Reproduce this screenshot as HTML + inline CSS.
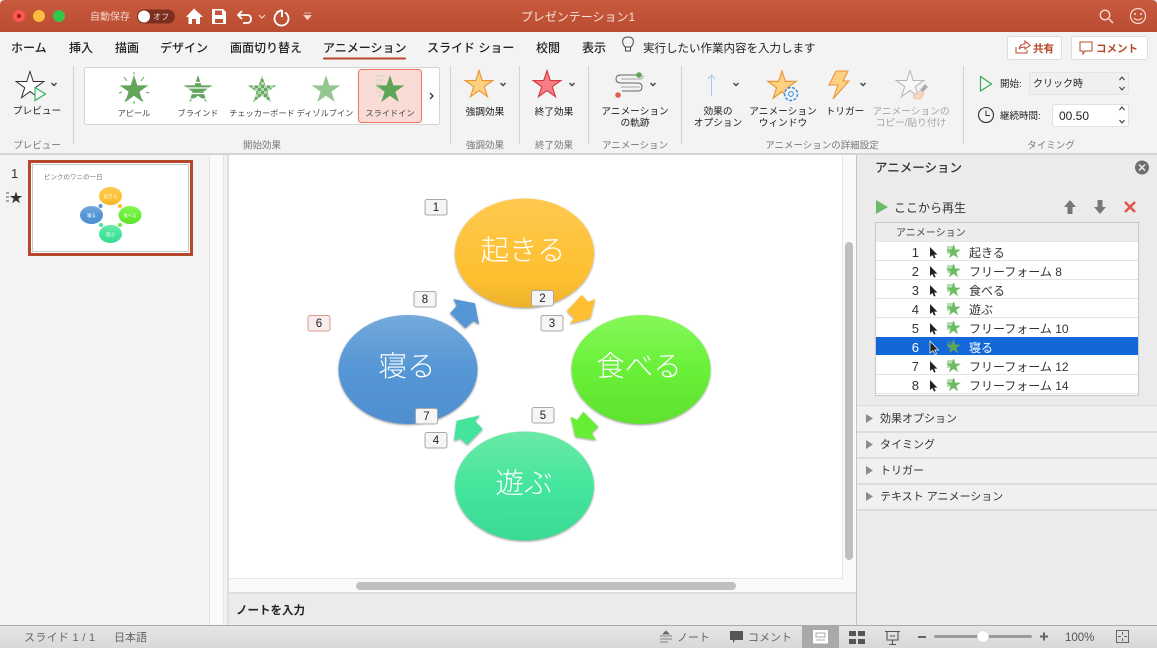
<!DOCTYPE html>
<html><head><meta charset="utf-8"><style>
html,body{margin:0;padding:0;background:#fff;width:1157px;height:648px;overflow:hidden}
svg{display:block}
text{font-family:"Liberation Sans","Noto Sans CJK JP",sans-serif;fill:#333}
.t{font-size:12px;font-weight:500;fill:#222}
.s{font-size:8.2px;fill:#444;text-anchor:middle}
.m{font-size:9.700px;fill:#222;text-anchor:middle}
.g{font-size:9.500px;fill:#777;text-anchor:middle}
.c{fill:none;stroke:#444;stroke-width:1.4}
.r{font-size:12px;fill:#333}
.n{font-size:13px;fill:#333;text-anchor:end}
.b{font-size:11.500px;fill:#222;text-anchor:middle}
.o{font-size:28.500px;fill:#fff;text-anchor:middle;font-weight:300}
.sec{font-size:11px;fill:#333}
.st{font-size:11px;fill:#666}
</style></head><body>
<svg width="1157" height="648" viewBox="0 0 1157 648" xmlns="http://www.w3.org/2000/svg">
<defs>
<path id="st" d="M0-10 2.245-3.09 9.51-3.09 3.633 1.18 5.88 8.09 0 3.82-5.88 8.09-3.633 1.18-9.51-3.09-2.245-3.09Z"/>
<linearGradient id="tb" x1="0" y1="0" x2="0" y2="1"><stop offset="0" stop-color="#c9593e"/><stop offset="1" stop-color="#b94d31"/></linearGradient>
<linearGradient id="go" x1="0" y1="0" x2="0" y2="1"><stop offset="0" stop-color="#ffc950"/><stop offset=".75" stop-color="#fdbf2e"/><stop offset="1" stop-color="#ecb22c"/></linearGradient>
<linearGradient id="gg" x1="0" y1="0" x2="0" y2="1"><stop offset="0" stop-color="#86f75a"/><stop offset=".5" stop-color="#69f038"/><stop offset="1" stop-color="#5fe22e"/></linearGradient>
<linearGradient id="gt" x1="0" y1="0" x2="0" y2="1"><stop offset="0" stop-color="#6ce8a8"/><stop offset=".5" stop-color="#44e69c"/><stop offset="1" stop-color="#3ada94"/></linearGradient>
<linearGradient id="gb" x1="0" y1="0" x2="0" y2="1"><stop offset="0" stop-color="#75a9db"/><stop offset=".5" stop-color="#5596d5"/><stop offset="1" stop-color="#4f8fcf"/></linearGradient>
<linearGradient id="sb" x1="0" y1="0" x2="0" y2="1"><stop offset="0" stop-color="#e6e6e6"/><stop offset="1" stop-color="#d8d8d8"/></linearGradient>
<filter id="sh" x="-10%" y="-10%" width="120%" height="120%"><feDropShadow dx="0" dy="1" stdDeviation="1" flood-color="#000" flood-opacity=".42"/></filter>
<pattern id="blind" width="6" height="5" patternUnits="userSpaceOnUse" y="77"><rect width="6" height="5" fill="#a9d0a4"/><rect width="6" height="3.200" fill="#62a55b"/></pattern>
<pattern id="chk" width="6" height="6" patternUnits="userSpaceOnUse" x="2" y="76"><rect width="6" height="6" fill="#b3d7ae"/><rect width="3" height="3" fill="#68a961"/><rect x="3" y="3" width="3" height="3" fill="#68a961"/></pattern>
<g id="rowi"><path d="M0 0V10L2.4 8 4 11.5 5.6 11 4.2 7.6H7.4Z" fill="#222" transform="translate(0,-5)"/><rect x="17" y="-6" width="8" height="8" fill="#b9dcb4"/><use href="#st" transform="translate(23.5,0) scale(.78)" fill="#6cbd62"/></g>
</defs>

<rect width="1157" height="648" fill="#ebebeb"/>
<!-- title bar -->
<path d="M0 32V5Q0 0 5 0H1152Q1157 0 1157 5V32Z" fill="url(#tb)"/>
<circle cx="19" cy="16" r="6" fill="#fc5753"/><circle cx="19" cy="16" r="2" fill="#8e1d18"/>
<circle cx="39" cy="16" r="6" fill="#fdbc40"/><circle cx="59" cy="16" r="6" fill="#34c84a"/>
<text x="90" y="20" font-size="10" style="fill:#f4d6cc">自動保存</text>
<rect x="137" y="9.500" width="38" height="14" rx="7" fill="#7c2f1f"/><circle cx="144" cy="16.500" r="6" fill="#fff"/>
<text x="153" y="19.500" font-size="8" style="fill:#eedcd7">オフ</text>
<path d="M186 17 194 8.500 203 17H200V24H196V19H192V24H188.500V17Z" fill="#fff"/>
<path d="M212 9H223L226 12V24H212ZM215 10.500V15H222V10.500ZM215 19V23H223V19Z" fill="#fff" fill-rule="evenodd"/>
<path d="M242 11 238 15 242 19M238 15H247Q251 15 251 19T247 23H243" fill="none" stroke="#fff" stroke-width="1.800"/>
<path d="M259 15 262 18 265 15" fill="none" stroke="#f3d5cc" stroke-width="1.200"/>
<path d="M278 12.500A7 7 0 1 0 285 12.500" fill="none" stroke="#fff" stroke-width="1.800"/><path d="M282 10V17M282 10 276.500 12.500" fill="none" stroke="#fff" stroke-width="2" opacity="1"/>
<path d="M304 13H311M304 15.500H311L307.500 19.500Z" fill="#f3d5cc" stroke="#f3d5cc" stroke-width=".8"/>
<text x="578" y="21" font-size="12" text-anchor="middle" style="fill:#f7e3dd">プレゼンテーション1</text>
<circle cx="1105" cy="15" r="4.800" fill="none" stroke="#f3dcd6" stroke-width="1.300"/><path d="M1109 19 1113 23" stroke="#f3dcd6" stroke-width="1.500"/>
<circle cx="1138" cy="16" r="7.500" fill="none" stroke="#f3dcd6" stroke-width="1.200"/><circle cx="1135" cy="14" r="1" fill="#f3dcd6"/><circle cx="1141" cy="14" r="1" fill="#f3dcd6"/><path d="M1134 18Q1138 22 1142 18" fill="none" stroke="#f3dcd6"/>

<!-- ribbon -->
<rect y="32" width="1157" height="121" fill="#f3f3f3"/><rect y="153" width="1157" height="2" fill="#d4d4d4"/>
<text class="t" x="11" y="52">ホーム</text><text class="t" x="69" y="52">挿入</text><text class="t" x="115" y="52">描画</text><text class="t" x="160" y="52">デザイン</text><text class="t" x="230" y="52">画面切り替え</text><text class="t" x="323" y="52">アニメーション</text><text class="t" x="427" y="52">スライド ショー</text><text class="t" x="536" y="52">校閲</text><text class="t" x="582" y="52">表示</text>
<rect x="323" y="57.500" width="83" height="2" rx="1" fill="#b7472a"/>
<path d="M625 47C621 42 622 37 628 37S635 42 631 47ZM625.500 47V51H630.500V47" fill="none" stroke="#444" stroke-width="1"/>
<text x="643" y="52" font-size="11.500" style="fill:#222">実行したい作業内容を入力します</text>
<rect x="1007.500" y="36.500" width="54" height="23" rx="2" fill="#fff" stroke="#ddd"/>
<path d="M1016 47V53H1027V50M1019 49Q1020 44 1025 44V41L1030 45.500 1025 49V47Q1021 47 1019 49" fill="none" stroke="#b7472a"/>
<text x="1033" y="52" font-size="10.500" font-weight="700" style="fill:#b7472a">共有</text>
<rect x="1071.500" y="36.500" width="76" height="23" rx="2" fill="#fff" stroke="#ddd"/>
<path d="M1080 42H1092V51H1085L1083 54V51H1080Z" fill="none" stroke="#b7472a"/>
<text x="1096" y="52" font-size="10.500" font-weight="700" style="fill:#b7472a">コメント</text>

<!-- separators -->
<g fill="#d2d2d2"><rect x="73" y="66" width="1" height="78"/><rect x="450" y="66" width="1" height="78"/><rect x="519" y="66" width="1" height="78"/><rect x="588" y="66" width="1" height="78"/><rect x="681" y="66" width="1" height="78"/><rect x="963" y="66" width="1" height="78"/></g>

<!-- preview -->
<use href="#st" transform="translate(30,86) scale(1.450)" fill="#fff" stroke="#333" stroke-width=".7"/>
<path d="M35 87.500 45.500 94 35 100.500Z" fill="#f7f7f7" stroke="#38b35a" stroke-width="1.200"/>
<path class="c" d="M51.500 83 54 85.500 56.500 83"/>
<text class="m" x="37" y="114">プレビュー</text>
<text class="g" x="37" y="148.500">プレビュー</text>

<!-- gallery -->
<rect x="84.500" y="67.500" width="355" height="57" rx="2" fill="#fff" stroke="#d4d4d4"/>
<rect x="358.500" y="69.500" width="63" height="53" rx="3" fill="#f9dcd5" stroke="#e8735f"/>
<use href="#st" transform="translate(134,90) scale(1.500)" fill="#62a55b"/>
<path d="M124 77 127 81M144 77 141 81M134 72V74.500M119 93 122 92M149 93 146 92M125 101 127.500 98M134 104V101M143 101 140.500 98" stroke="#62a55b" fill="none"/>
<path transform="translate(198,90)" d="M0-15 3.370-4.640 14.270-4.640 5.450 1.770 8.820 12.140 0 5.730-8.820 12.140-5.450 1.770-14.270-4.640-3.370-4.640Z" fill="#62a55b"/>
<g stroke="#fff" stroke-width="1.200"><path d="M180 82.500H216M180 88H216M180 93.500H216M180 99H216"/></g>
<path transform="translate(262,90)" d="M0-15 3.370-4.640 14.270-4.640 5.450 1.770 8.820 12.140 0 5.730-8.820 12.140-5.450 1.770-14.270-4.640-3.370-4.640Z" fill="url(#chk)"/>
<use href="#st" transform="translate(326,90) scale(1.500)" fill="#97c791"/>
<use href="#st" transform="translate(390,90) scale(1.500)" fill="#5fa558"/>
<path d="M376 76H386M375 80H383M376 84H382M376 88H380M377 92H381M378 96H381" stroke="#c6d7c0"/>
<text class="s" x="134" y="116">アピール</text>
<text class="s" x="198" y="116">ブラインド</text>
<text class="s" x="262" y="116">チェッカーボード</text>
<text class="s" x="325" y="116">ディゾルブイン</text>
<text class="s" x="390" y="116">スライドイン</text>
<path d="M430 93 433 96 430 99" fill="none" stroke="#333" stroke-width="1.300"/>
<text class="g" x="262" y="148.500">開始効果</text>

<!-- emphasis -->
<use href="#st" transform="translate(479,85) scale(1.450)" fill="#fdd17f" stroke="#e8983a" stroke-width=".8"/>
<path class="c" d="M500.500 83 503 85.500 505.500 83"/>
<text class="m" x="485" y="115">強調効果</text><text class="g" x="485" y="148.500">強調効果</text>
<use href="#st" transform="translate(547,85) scale(1.450)" fill="#f87d86" stroke="#d33a42" stroke-width=".8"/>
<path class="c" d="M569.500 83 572 85.500 574.500 83"/>
<text class="m" x="554" y="115">終了効果</text><text class="g" x="554" y="148.500">終了効果</text>
<!-- motion -->
<path d="M638 75H621Q616 75 616 79T621 83H638Q642 83 642 87T638 91H622" fill="none" stroke="#666"/>
<circle cx="639" cy="75" r="2.800" fill="#5fa558"/><circle cx="618" cy="95" r="2.800" fill="#e25b50"/>
<path d="M621 79H640Q643 79 643 75M621 87H640" fill="none" stroke="#666" opacity=".55"/>
<path class="c" d="M650.500 83 653 85.500 655.500 83"/>
<text class="m" x="635" y="114.500">アニメーション</text><text class="m" x="635" y="126">の軌跡</text>
<text class="g" x="635" y="148.500">アニメーション</text>
<!-- options -->
<path d="M711.500 96V75M708 79 711.500 75 715 79" fill="none" stroke="#a7c8e6"/>
<path class="c" d="M733.500 83 736 85.500 738.500 83"/>
<text class="m" x="718" y="114.500">効果の</text><text class="m" x="718" y="126">オプション</text>
<use href="#st" transform="translate(782,86) scale(1.500)" fill="#fdd17f" stroke="#e8983a" stroke-width=".8"/>
<circle cx="791" cy="94" r="6.500" fill="#f3f3f3" stroke="#2f8ae0" stroke-width="1.400" stroke-dasharray="3 1.500"/><circle cx="791" cy="94" r="2.400" fill="none" stroke="#2f8ae0"/>
<text class="m" x="783" y="114.500">アニメーション</text><text class="m" x="783" y="126">ウィンドウ</text>
<path d="M836 71H848L843 81H849L833 99 838 85H829Z" fill="#fdd17f" stroke="#ec8f3a"/>
<path class="c" d="M860.500 83 863 85.500 865.500 83"/>
<text class="m" x="845" y="114.500">トリガー</text>
<use href="#st" transform="translate(910,85) scale(1.450)" fill="#f8f8f8" stroke="#b5b5b5" stroke-width=".7"/>
<path d="M913 96 921 90 924 93 921 99H914Z" fill="#f5d6c3" stroke="#e0b8a0" stroke-width=".6"/><path d="M920 90 925 84 928 87 923 92Z" fill="#aaa"/>
<text class="m" x="911" y="114.500" style="fill:#a5a5a5">アニメーションの</text><text class="m" x="911" y="126" style="fill:#a5a5a5">コピー/貼り付け</text>
<text class="g" x="822" y="148.500">アニメーションの詳細設定</text>
<!-- timing -->
<path d="M980.500 76.500 991.500 84 980.500 91Z" fill="none" stroke="#3ca85a" stroke-width="1.200"/>
<text x="1000" y="87" font-size="9.500" style="fill:#222">開始:</text>
<rect x="1029.500" y="72.500" width="99" height="22" rx="2" fill="#f0f0f0" stroke="#e4e4e4"/>
<text x="1033" y="87" font-size="10" style="fill:#222">クリック時</text>
<path d="M1119.500 80 1122 77 1124.500 80M1119.500 87 1122 90 1124.500 87" fill="none" stroke="#333"/>
<circle cx="986" cy="115" r="7.500" fill="none" stroke="#333" stroke-width="1.100"/><path d="M986 110.500V115.500H990" fill="none" stroke="#333"/>
<text x="1000" y="119" font-size="9.500" style="fill:#222">継続時間:</text>
<rect x="1052.500" y="104.500" width="76" height="22" rx="2" fill="#fff" stroke="#e0e0e0"/>
<text x="1059" y="120" font-size="12" style="fill:#222">00.50</text>
<path d="M1119.500 110 1122 107 1124.500 110M1119.500 120 1122 123 1124.500 120" fill="none" stroke="#333"/>
<text class="g" x="1051" y="148.500">タイミング</text>

<!-- thumbnails pane -->
<rect y="155" width="209" height="470" fill="#f3f3f3"/>
<rect x="209" y="155" width="1" height="470" fill="#e2e2e2"/><rect x="210" y="155" width="13" height="470" fill="#fafafa"/><rect x="223" y="155" width="1" height="470" fill="#e6e6e6"/><rect x="224" y="155" width="3" height="470" fill="#f3f3f3"/><rect x="227" y="155" width="2" height="470" fill="#dedede"/>
<text x="11" y="178" font-size="13" style="fill:#333">1</text>
<path d="M6 193H9M6 197H9M6 201H9" stroke="#555"/>
<use href="#st" transform="translate(16,198) scale(.65)" fill="#333"/>
<rect x="29.500" y="161.500" width="162" height="93" fill="#fff" stroke="#b7472a" stroke-width="3"/>
<rect x="32.500" y="164.500" width="156" height="87" fill="#fff" stroke="#c8c8c8"/>
<text x="44" y="179" font-size="6.500" style="fill:#777">ピンクのワニの一日</text>
<ellipse cx="110.500" cy="196" rx="11.500" ry="9" fill="url(#go)"/><ellipse cx="130" cy="215" rx="11.500" ry="9" fill="url(#gg)"/><ellipse cx="110.500" cy="234" rx="11.500" ry="9" fill="url(#gt)"/><ellipse cx="91.500" cy="215" rx="11.500" ry="9" fill="url(#gb)"/>
<circle cx="120" cy="206" r="2" fill="#fdbf2d"/><circle cx="120" cy="225" r="2" fill="#69f038"/><circle cx="101" cy="225" r="2" fill="#44e69c"/><circle cx="100.500" cy="206" r="2" fill="#5596d5"/>
<g font-size="4.500" text-anchor="middle"><text x="110.500" y="198" style="fill:#fff">起きる</text><text x="130" y="217" style="fill:#fff">食べる</text><text x="110.500" y="236" style="fill:#fff">遊ぶ</text><text x="91.500" y="217" style="fill:#fff">寝る</text></g>

<!-- slide area -->
<rect x="229" y="155" width="627" height="437" fill="#fafafa"/>
<rect x="229" y="155" width="613" height="423" fill="#fff"/>
<rect x="842" y="155" width="1" height="424" fill="#e6e6e6"/><rect x="229" y="578" width="614" height="1" fill="#e6e6e6"/>
<rect x="845" y="242" width="8" height="318" rx="4" fill="#bfbfbf"/>
<rect x="356" y="582" width="380" height="8" rx="4" fill="#bfbfbf"/>
<rect x="229" y="592" width="627" height="2" fill="#dedede"/>
<rect x="229" y="594" width="627" height="31" fill="#ebebeb"/>
<text x="236" y="614" font-size="11.500" font-weight="700" style="fill:#222">ノートを入力</text>

<ellipse cx="524.500" cy="253" rx="69.500" ry="54.500" fill="url(#go)" filter="url(#sh)"/>
<ellipse cx="641" cy="369.500" rx="69.500" ry="54.500" fill="url(#gg)" filter="url(#sh)"/>
<ellipse cx="524.500" cy="486" rx="69.500" ry="54.500" fill="url(#gt)" filter="url(#sh)"/>
<ellipse cx="408" cy="369.500" rx="69.500" ry="54.500" fill="url(#gb)" filter="url(#sh)"/>
<polygon points="581.700,295 588.300,301.700 595,299 590.300,318.300 569.700,323.700 574.300,318.300 566.700,311" fill="#fdc032" filter="url(#sh)"/>
<polygon points="583.300,411.700 598.300,426.700 591.700,432.700 596,440 575.300,436.700 570.700,416.700 577.300,420" fill="#66ee36" filter="url(#sh)"/>
<polygon points="480,415.300 475,421 482.700,429 467.300,444.700 460,438.300 454,440.700 456.700,420.700" fill="#44e49c" filter="url(#sh)"/>
<polygon points="453.300,299 475,303.300 479,324.300 473.300,321 465.300,328.300 450,313.300 456.700,305.700" fill="#5596d5" filter="url(#sh)"/>
<text class="o" x="523" y="260">起きる</text>
<text class="o" x="639" y="376">食べる</text>
<text class="o" x="524" y="493">遊ぶ</text>
<text class="o" x="407" y="376">寝る</text>

<g fill="#f5f5f5" stroke="#a8a8a8">
<rect x="425" y="199.500" width="22" height="15.500" rx="2"/><rect x="531.500" y="290.500" width="22" height="15.500" rx="2"/><rect x="541" y="315.500" width="22" height="15.500" rx="2"/><rect x="425" y="432.500" width="22" height="15.500" rx="2"/><rect x="532" y="407.500" width="22" height="15.500" rx="2"/><rect x="415.500" y="408.500" width="22" height="15.500" rx="2"/><rect x="414" y="291.500" width="22" height="15.500" rx="2"/>
<rect x="308" y="315.500" width="22" height="15.500" rx="2" stroke="#dc9a8e" fill="#f8eeec"/>
</g>
<text class="b" x="436" y="211">1</text><text class="b" x="542.500" y="302">2</text><text class="b" x="552" y="327">3</text><text class="b" x="436" y="444">4</text><text class="b" x="543" y="419">5</text><text class="b" x="319" y="327">6</text><text class="b" x="426.500" y="420">7</text><text class="b" x="425" y="303">8</text>

<!-- right panel -->
<rect x="856" y="155" width="301" height="471" fill="#ebebeb"/><rect x="856" y="155" width="1" height="471" fill="#c4c4c4"/>
<text x="875" y="172" font-size="12.500" font-weight="500" style="fill:#333">アニメーション</text>
<circle cx="1142" cy="167.500" r="7" fill="#6e6e6e"/><path d="M1139 164.500 1145 170.500M1145 164.500 1139 170.500" stroke="#eee" stroke-width="1.500"/>
<path d="M876 200V214L888 207Z" fill="#6cb96a"/>
<text x="894" y="212" font-size="12" style="fill:#333">ここから再生</text>
<path d="M1070 200 1076 207H1072.500V214H1067.500V207H1064Z" fill="#777"/>
<path d="M1100 214 1106 207H1102.500V200H1097.500V207H1094Z" fill="#777"/>
<path d="M1125 202 1135 212M1135 202 1125 212" stroke="#e25550" stroke-width="2.600"/>
<rect x="875.500" y="222.500" width="263" height="173" fill="#fff" stroke="#c8c8c8"/>
<rect x="876" y="223" width="262" height="18" fill="#ececec"/>
<text x="896" y="236" font-size="10" style="fill:#444">アニメーション</text>
<g fill="#e4e4e4"><rect x="876" y="241" width="262" height="1"/><rect x="876" y="260" width="262" height="1"/><rect x="876" y="279" width="262" height="1"/><rect x="876" y="298" width="262" height="1"/><rect x="876" y="317" width="262" height="1"/><rect x="876" y="374" width="262" height="1"/><rect x="876" y="393" width="262" height="1"/></g>
<rect x="876" y="337" width="262" height="18" fill="#1268d8"/>
<text class="n" x="919" y="257">1</text><text class="n" x="919" y="276">2</text><text class="n" x="919" y="295">3</text><text class="n" x="919" y="314">4</text><text class="n" x="919" y="333">5</text><text class="n" x="919" y="352" style="fill:#fff">6</text><text class="n" x="919" y="371">7</text><text class="n" x="919" y="390">8</text>
<use href="#rowi" x="930" y="252"/><use href="#rowi" x="930" y="271"/><use href="#rowi" x="930" y="290"/><use href="#rowi" x="930" y="309"/><use href="#rowi" x="930" y="328"/><use href="#rowi" x="930" y="366"/><use href="#rowi" x="930" y="385"/>
<path d="M930 341V353L933 350.500 935 354.500 936.500 353.800 934.800 350H938.500Z" fill="#222" stroke="#fff" stroke-width=".7"/>
<rect x="947" y="341" width="8" height="8" fill="#2b7db8"/><use href="#st" transform="translate(953.500,347) scale(.78)" fill="#5fa558"/>
<text class="r" x="969" y="257">起きる</text><text class="r" x="969" y="276">フリーフォーム 8</text><text class="r" x="969" y="295">食べる</text><text class="r" x="969" y="314">遊ぶ</text><text class="r" x="969" y="333">フリーフォーム 10</text><text class="r" x="969" y="352" style="fill:#fff">寝る</text><text class="r" x="969" y="371">フリーフォーム 12</text><text class="r" x="969" y="390">フリーフォーム 14</text>

<g fill="#f0f0f0"><rect x="857" y="406" width="300" height="25"/><rect x="857" y="432" width="300" height="25"/><rect x="857" y="458" width="300" height="25"/><rect x="857" y="484" width="300" height="25"/></g>
<g fill="#dcdcdc"><rect x="857" y="405" width="300" height="1"/><rect x="857" y="431" width="300" height="2"/><rect x="857" y="457" width="300" height="2"/><rect x="857" y="483" width="300" height="2"/><rect x="857" y="509" width="300" height="2"/></g>
<g fill="#8c8c8c"><path d="M866 414V423L873 418.500Z"/><path d="M866 440V449L873 444.500Z"/><path d="M866 466V475L873 470.500Z"/><path d="M866 492V501L873 496.500Z"/></g>
<text class="sec" x="880" y="422">効果オプション</text><text class="sec" x="880" y="448">タイミング</text><text class="sec" x="880" y="474">トリガー</text><text class="sec" x="880" y="500">テキスト アニメーション</text>

<!-- status bar -->
<rect y="625" width="1157" height="23" fill="url(#sb)"/><rect y="625" width="1157" height="1" fill="#ababab"/>
<text class="st" x="24" y="641" letter-spacing=".3">スライド 1 / 1</text><text class="st" x="114" y="641">日本語</text>
<path d="M663 634 666 631 669 634ZM660 636H672M660 639H672M660 642H668" fill="#666" stroke="#666" stroke-width=".8"/>
<text class="st" x="677" y="641">ノート</text>
<path d="M730 631H743V640H735L733 643V640H730Z" fill="#555"/>
<text class="st" x="748" y="641">コメント</text>
<rect x="802" y="626" width="37" height="22" fill="#a9a9a9"/>
<rect x="813" y="630" width="15" height="13.500" fill="#fff"/><path d="M816 633H825V637H816ZM816 640H825" fill="none" stroke="#a9a9a9"/>
<g fill="#555"><rect x="849" y="631" width="7" height="5"/><rect x="858" y="631" width="7" height="5"/><rect x="849" y="639" width="7" height="5"/><rect x="858" y="639" width="7" height="5"/></g>
<path d="M885 631.500H900M887 632V640H898V632M892.500 640V644M889 644.500H896M890 636H895" fill="none" stroke="#555" stroke-width="1.100"/>
<rect x="918" y="636" width="8" height="2" fill="#666"/>
<rect x="934" y="635" width="98" height="3" rx="1.500" fill="#9a9a9a"/><circle cx="983" cy="636.500" r="5.800" fill="#fff" stroke="#ccc" stroke-width=".5"/>
<path d="M1040 636.500H1048M1044 632.500V640.500" stroke="#666" stroke-width="2"/>
<text x="1065" y="641" font-size="11.500" style="fill:#555">100%</text>
<rect x="1116.500" y="630.500" width="12" height="12" fill="none" stroke="#666"/>
<path d="M1122.500 632V635M1122.500 638V641M1118 636.500H1121M1124 636.500H1127" stroke="#666"/>
</svg>
</body></html>
